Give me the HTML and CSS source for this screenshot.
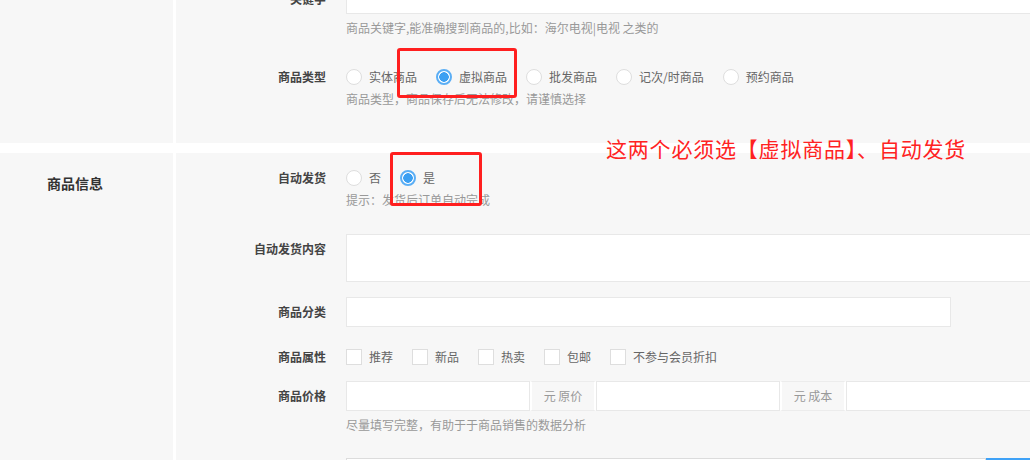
FILE: index.html
```html
<!DOCTYPE html>
<html lang="zh-CN">
<head>
<meta charset="utf-8">
<title>商品信息</title>
<link rel="stylesheet" href="styles.css">
</head>
<body>
<div class="page">
  <section class="panel panel--first">
    <div class="panel-side"></div>
    <div class="panel-main">
      <div class="row row--keyword">
        <label class="row-label">关键字</label>
        <div class="row-body">
          <input class="field field--wide" type="text">
          <p class="hint">商品关键字,能准确搜到商品的,比如：海尔电视|电视 之类的</p>
        </div>
      </div>
      <div class="row row--choice">
        <label class="row-label">商品类型</label>
        <div class="row-body">
          <div class="choices">
            <span class="choice"><i class="radio"></i>实体商品</span>
            <span class="choice"><i class="radio radio--on"></i>虚拟商品</span>
            <span class="choice"><i class="radio"></i>批发商品</span>
            <span class="choice"><i class="radio"></i>记次/时商品</span>
            <span class="choice"><i class="radio"></i>预约商品</span>
          </div>
          <p class="hint">商品类型，商品保存后无法修改，请谨慎选择</p>
        </div>
      </div>
    </div>
  </section>

  <section class="panel panel--info">
    <div class="panel-side"><h2 class="panel-title">商品信息</h2></div>
    <div class="panel-main">
      <div class="row row--choice row--auto">
        <label class="row-label">自动发货</label>
        <div class="row-body">
          <div class="choices">
            <span class="choice"><i class="radio"></i>否</span>
            <span class="choice"><i class="radio radio--on"></i>是</span>
          </div>
          <p class="hint">提示：发货后订单自动完成</p>
        </div>
      </div>
      <div class="row row--content">
        <label class="row-label">自动发货内容</label>
        <div class="row-body">
          <textarea class="field field--wide field--area"></textarea>
        </div>
      </div>
      <div class="row row--category">
        <label class="row-label">商品分类</label>
        <div class="row-body">
          <input class="field field--category" type="text">
        </div>
      </div>
      <div class="row row--choice row--attrs">
        <label class="row-label">商品属性</label>
        <div class="row-body">
          <div class="choices">
            <span class="choice"><i class="check"></i>推荐</span>
            <span class="choice"><i class="check"></i>新品</span>
            <span class="choice"><i class="check"></i>热卖</span>
            <span class="choice"><i class="check"></i>包邮</span>
            <span class="choice"><i class="check"></i>不参与会员折扣</span>
          </div>
        </div>
      </div>
      <div class="row row--price">
        <label class="row-label">商品价格</label>
        <div class="row-body">
          <div class="input-group">
            <input class="field field--part" type="text">
            <span class="addon">元 原价</span>
            <input class="field field--part" type="text">
            <span class="addon">元 成本</span>
            <input class="field field--part field--last" type="text">
          </div>
          <p class="hint">尽量填写完整，有助于于商品销售的数据分析</p>
        </div>
      </div>
      <div class="row row--next">
        <label class="row-label"></label>
        <div class="row-body">
          <div class="input-group">
            <input class="field field--next" type="text">
            <span class="btn-blue"></span>
          </div>
        </div>
      </div>
    </div>
  </section>
</div>

<div class="mark mark--type"></div>
<div class="mark mark--auto"></div>
<div class="note">这两个必须选【虚拟商品】、自动发货</div>
</body>
</html>
```

FILE: styles.css
```css
html, body {
  margin: 0;
  padding: 0;
  background: #fff;
  overflow: hidden;
}
body {
  width: 1030px;
  height: 460px;
  font-family: "Noto Sans CJK SC", "Microsoft YaHei", sans-serif;
  font-size: 12px;
  color: #666;
}
.page {
  display: flex;
  flex-direction: column;
  gap: 10px;
}
.panel {
  display: flex;
  gap: 3px;
}
.panel--first {
  margin-top: -16px;
}
.panel-side {
  width: 173px;
  flex: none;
  background: #f7f7f7;
}
.panel-main {
  flex: 1;
  background: #f7f7f7;
  overflow: hidden;
}
.panel--first .panel-main {
  padding-bottom: 35px;
}
.panel--info .panel-main {
  padding-top: 17px;
}
.panel-title {
  margin: 0;
  padding: 20px 0 0 47px;
  font-size: 14px;
  line-height: 20px;
  font-weight: 700;
  color: #333;
}
.row {
  display: flex;
  align-items: flex-start;
}
.row-label {
  width: 170px;
  flex: none;
  box-sizing: border-box;
  padding-right: 20px;
  text-align: right;
  font-weight: 700;
  color: #444;
  line-height: 30px;
}
.row--choice .row-label {
  line-height: 16px;
}
.row-body {
  flex: none;
}
.row--keyword { margin-bottom: 32px; }
.row--auto { margin-bottom: 25px; }
.row--content { margin-bottom: 15px; }
.row--category { margin-bottom: 22px; }
.row--attrs { margin-bottom: 16px; }
.row--price { margin-bottom: 24px; }

.field {
  display: block;
  box-sizing: border-box;
  height: 30px;
  margin: 0;
  padding: 0 8px;
  border: 1px solid #e8e8e8;
  background: #fff;
  font: inherit;
  outline: none;
}
.field--wide { width: 720px; }
.field--area { height: 48px; resize: none; }
.field--category { width: 605px; }
.field--part { width: 184px; }
.field--last { width: 220px; }
.field--next { width: 640px; border-color: #dcdcdc; }

.hint {
  margin: 5px 0 0;
  line-height: 18px;
  color: #999;
  white-space: nowrap;
}
.choices {
  display: flex;
  align-items: center;
  height: 16px;
  line-height: 16px;
  white-space: nowrap;
}
.choice {
  display: inline-flex;
  align-items: center;
  gap: 7px;
  margin-right: 19px;
  color: #666;
}
.radio {
  display: block;
  box-sizing: border-box;
  width: 16px;
  height: 16px;
  border: 1px solid #dedede;
  border-radius: 50%;
  background: #fff;
}
.radio--on {
  border: 2px solid #5aaef5;
  background: radial-gradient(circle, #3b9ff2 0 4.5px, #fff 5px);
}
.check {
  display: block;
  box-sizing: border-box;
  width: 16px;
  height: 16px;
  border: 1px solid #dedede;
  background: #fff;
}
.input-group {
  display: flex;
  height: 30px;
}
.addon {
  box-sizing: border-box;
  width: 66px;
  height: 30px;
  line-height: 28px;
  text-align: center;
  color: #999;
  background: #f7f7f7;
  border: 1px solid #ececec;
  border-left: 2px solid #fff;
  border-right: 2px solid #fff;
}
.btn-blue {
  width: 60px;
  height: 30px;
  background: #3fa2f7;
}

.mark {
  position: absolute;
  box-sizing: border-box;
  border: 3px solid #ff1f1f;
  border-radius: 3px;
}
.mark--type {
  left: 397px;
  top: 48px;
  width: 120px;
  height: 50px;
}
.mark--auto {
  left: 390px;
  top: 152px;
  width: 92px;
  height: 54px;
}
.note {
  position: absolute;
  left: 606px;
  top: 136px;
  font-size: 21px;
  line-height: 24px;
  letter-spacing: 0.8px;
  color: #ff2222;
  white-space: nowrap;
}
```
